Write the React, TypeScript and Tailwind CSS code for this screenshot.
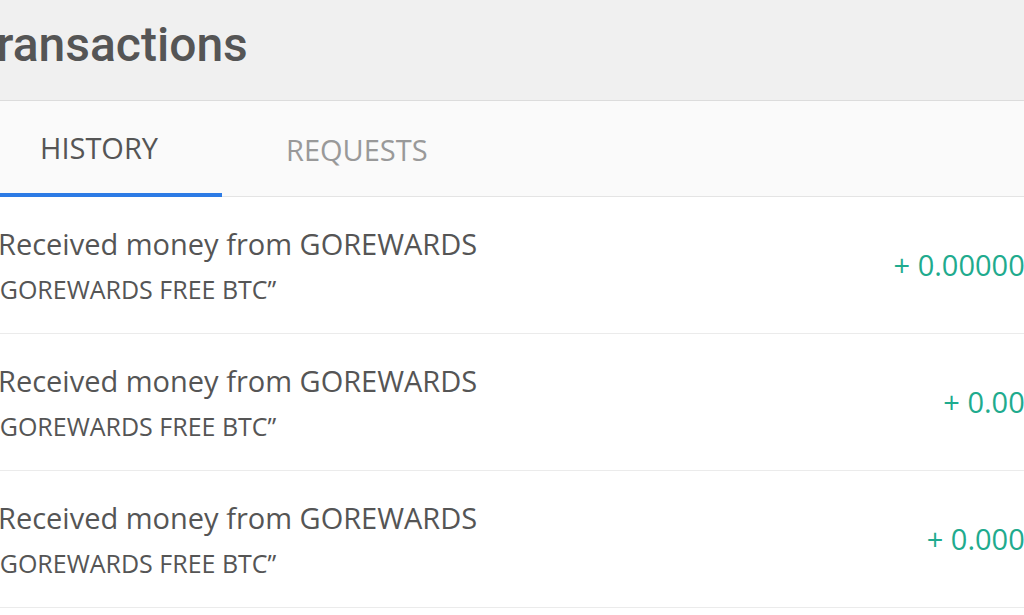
import React from "react";

const rows = [
  { title: "Received money from GOREWARDS", note: "“GOREWARDS FREE BTC”", amount: "+ 0.00000512 BTC" },
  { title: "Received money from GOREWARDS", note: "“GOREWARDS FREE BTC”", amount: "+ 0.00512 BTC" },
  { title: "Received money from GOREWARDS", note: "“GOREWARDS FREE BTC”", amount: "+ 0.000512 BTC" },
];

export default function App() {
  return (
    <div className="w-[1024px] h-[615px] overflow-hidden bg-white">
      <div className="-ml-[24px] w-[1200px] flex flex-col">
        {/* Page header */}
        <div className="h-[101px] bg-[#f0f0f0] border-b border-[#dcdcdc] flex items-start pt-[21px]">
          <h1 className="-ml-[7px] font-['Roboto',sans-serif] font-medium text-[48px] leading-none text-[#555555]">
            Transactions
          </h1>
        </div>

        {/* Tabs */}
        <div className="h-[96px] bg-[#fafafa] border-b border-[#e4e4e4] flex items-stretch font-['Open_Sans',sans-serif] text-[29px]">
          <button className="px-[64px] flex items-center text-[#555555] border-b-[4px] border-[#2c7be5] -mb-px pt-[2px]">
            HISTORY
          </button>
          <button className="px-[64px] flex items-center text-[#999999] pt-[2px]">
            REQUESTS
          </button>
        </div>

        {/* Transaction rows */}
        <div className="flex flex-col font-['Open_Sans',sans-serif]">
          {rows.map((r, i) => (
            <div
              key={i}
              className="h-[137px] border-b border-[#ebebeb] flex items-center justify-between pl-[22px] pr-[41px] bg-white"
            >
              <div className="flex flex-col">
                <span className="text-[29px] leading-[40px] text-[#555555]">{r.title}</span>
                <span className="-ml-[7px] text-[25px] leading-[36px] text-[#555555] mt-[7px]">{r.note}</span>
              </div>
              <span className="text-[29px] text-[#1fab8e]">{r.amount}</span>
            </div>
          ))}
        </div>
      </div>
    </div>
  );
}
